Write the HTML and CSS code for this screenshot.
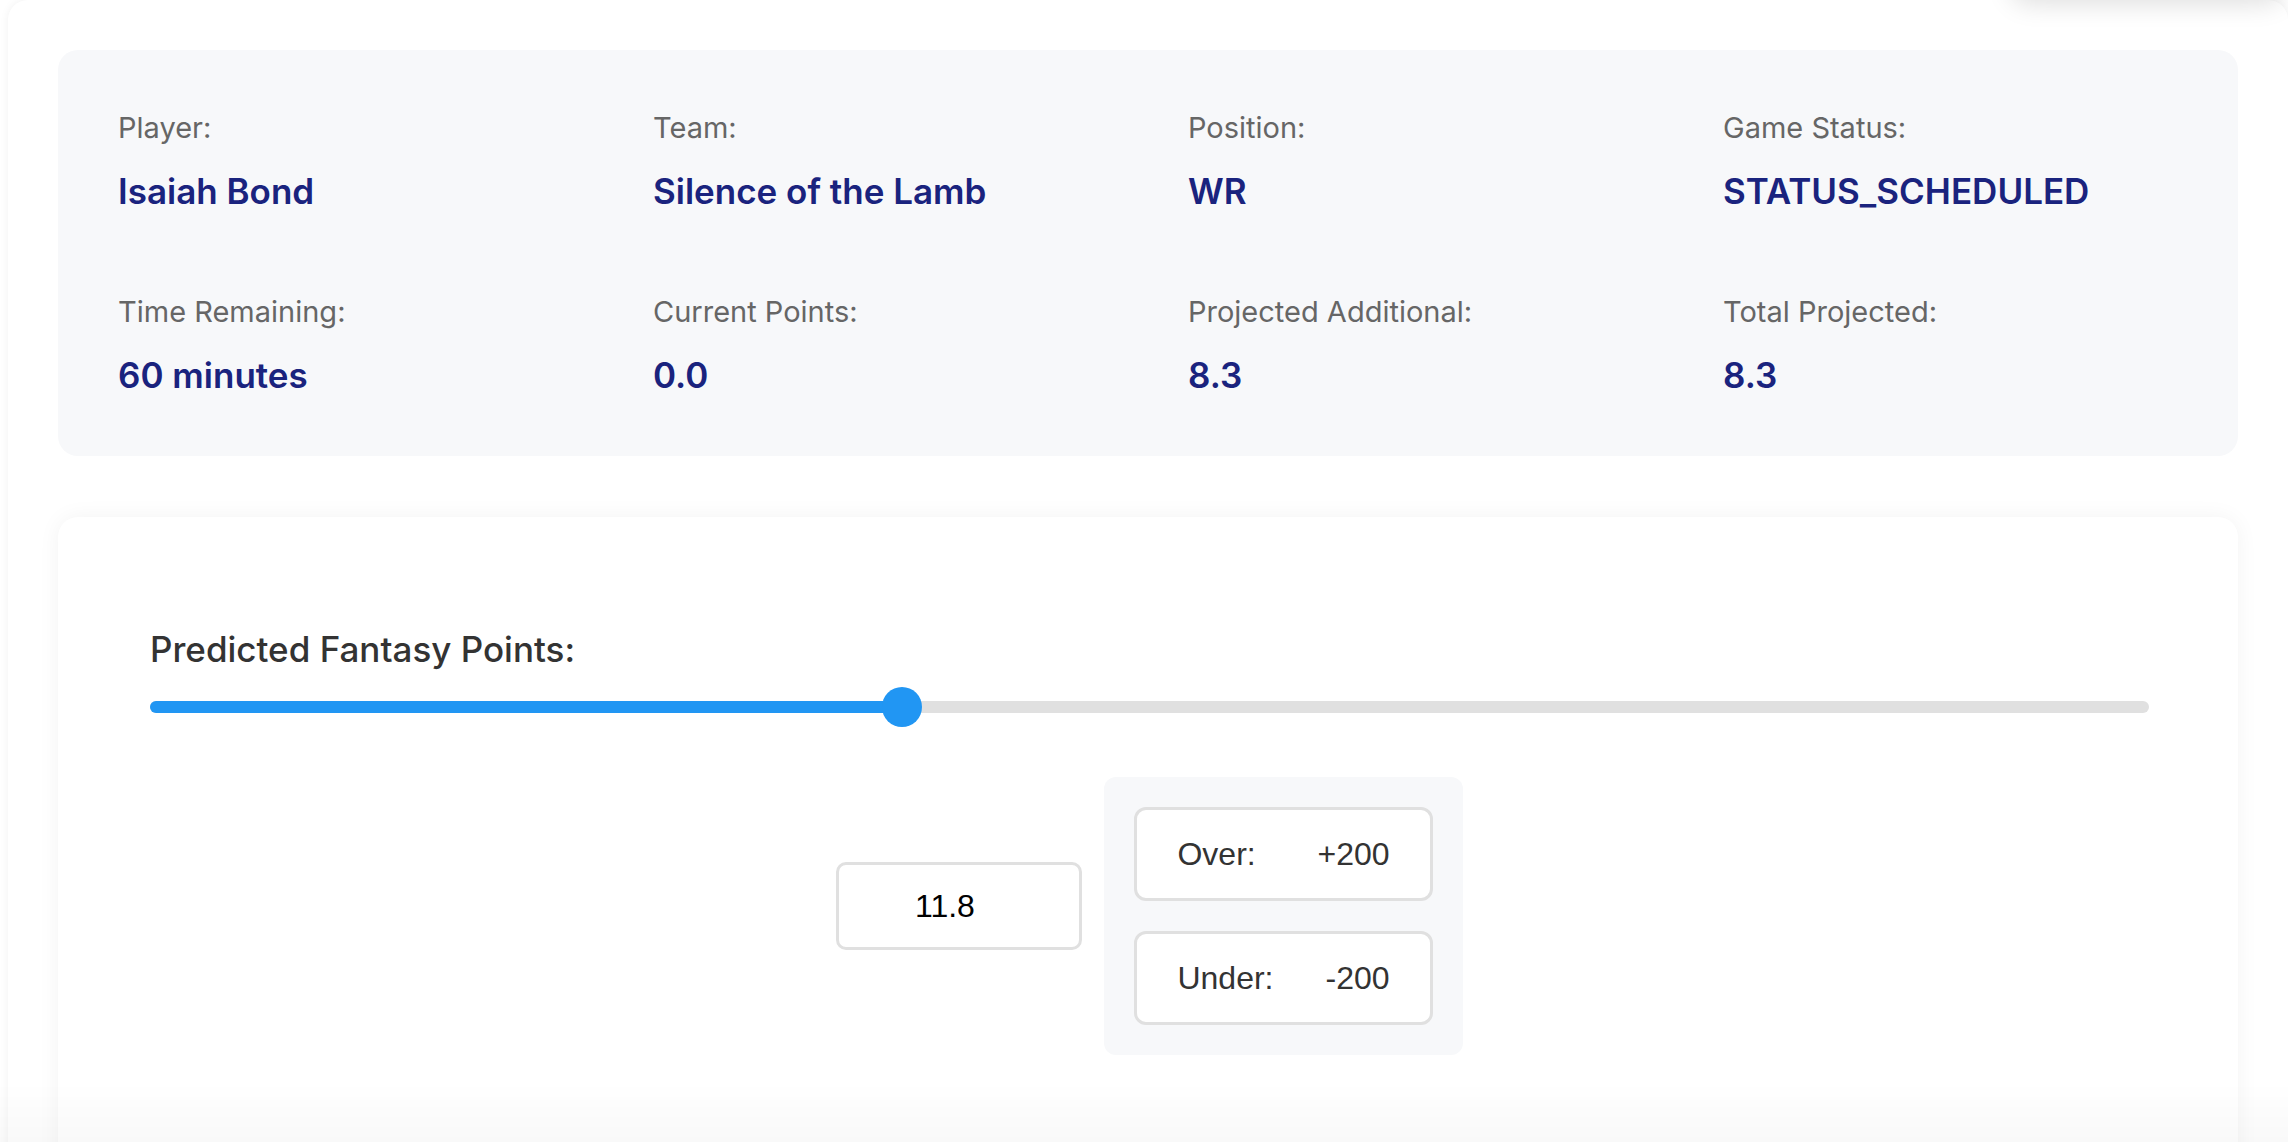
FILE: index.html
```html
<!DOCTYPE html>
<html lang="en">
<head>
<meta charset="utf-8">
<title>Player Prediction</title>
<link rel="stylesheet" href="styles.css">
</head>
<body>
<div class="top-popover"></div>
<main class="container">
  <section class="info">
    <div class="item"><div class="label">Player:</div><div class="value">Isaiah Bond</div></div>
    <div class="item"><div class="label">Team:</div><div class="value">Silence of the Lamb</div></div>
    <div class="item"><div class="label">Position:</div><div class="value">WR</div></div>
    <div class="item"><div class="label">Game Status:</div><div class="value">STATUS_SCHEDULED</div></div>
    <div class="item"><div class="label">Time Remaining:</div><div class="value">60 minutes</div></div>
    <div class="item"><div class="label">Current Points:</div><div class="value">0.0</div></div>
    <div class="item"><div class="label">Projected Additional:</div><div class="value">8.3</div></div>
    <div class="item"><div class="label">Total Projected:</div><div class="value">8.3</div></div>
  </section>
  <section class="card">
    <div class="heading">Predicted Fantasy Points:</div>
    <div class="slider">
      <div class="track">
        <div class="fill" style="width:37.62%"></div>
        <div class="thumb" style="left:37.62%"></div>
      </div>
    </div>
    <div class="bet-row">
      <input class="points-input" type="text" value="11.8">
      <div class="odds">
        <div class="odd"><span>Over:</span><span>+200</span></div>
        <div class="odd"><span>Under:</span><span>-200</span></div>
      </div>
    </div>
  </section>
</main>
<div class="bottom-fade"></div>
</body>
</html>
```
FILE: styles.css
```css
html, body {
  margin: 0;
  padding: 0;
  background: #ffffff;
  overflow: hidden;
}

body {
  font-family: "Inter", "Liberation Sans", sans-serif;
}

.top-popover {
  position: absolute;
  top: -100px;
  left: 2010px;
  width: 274px;
  height: 98px;
  border-radius: 20px;
  background: #ffffff;
  box-shadow: 0 6px 26px rgba(0, 0, 0, 0.13);
  z-index: 2;
}

.container {
  margin-left: 8px;
  padding: 50px;
  background: #ffffff;
  border-radius: 20px;
  box-shadow: 0 0 10px rgba(0, 0, 0, 0.06);
}

.info {
  display: grid;
  grid-template-columns: repeat(4, 1fr);
  column-gap: 40px;
  row-gap: 42px;
  padding: 40px;
  background: #f7f8fa;
  border-radius: 20px;
}

.item {
  padding: 20px;
}

.label {
  font-size: 29px;
  line-height: 35px;
  color: #666666;
  margin-bottom: 25px;
}

.value {
  font-size: 35px;
  line-height: 42px;
  font-weight: 600;
  color: #1a237e;
}

.card {
  margin-top: 61px;
  padding: 111px 89px 140px 92px;
  background: #ffffff;
  border-radius: 20px;
  box-shadow: 0 0 22px rgba(0, 0, 0, 0.05);
}

.heading {
  font-size: 35px;
  line-height: 42px;
  font-weight: 500;
  color: #333333;
  margin-bottom: 17px;
}

.slider {
  height: 40px;
  display: flex;
  align-items: center;
}

.track {
  position: relative;
  width: 100%;
  height: 12px;
  border-radius: 6px;
  background: #e0e0e0;
}

.fill {
  height: 100%;
  border-radius: 6px;
  background: #2196f3;
}

.thumb {
  position: absolute;
  top: 50%;
  width: 40px;
  height: 40px;
  margin: -20px 0 0 -20px;
  border-radius: 50%;
  background: #2196f3;
}

.bet-row {
  margin-top: 50px;
  display: flex;
  justify-content: center;
  align-items: center;
  gap: 22px;
}

.points-input {
  box-sizing: border-box;
  width: 246px;
  height: 88px;
  margin: 0 0 20px 0;
  padding: 0 29px 0 0;
  border: 3px solid #e0e0e0;
  border-radius: 10px;
  background: #ffffff;
  font-family: "Liberation Sans", Arial, sans-serif;
  font-size: 32px;
  color: #000000;
  text-align: center;
  outline: none;
}

.odds {
  display: flex;
  flex-direction: column;
  gap: 30px;
  padding: 30px;
  background: #f7f8fa;
  border-radius: 12px;
}

.odd {
  box-sizing: border-box;
  height: 94px;
  display: flex;
  align-items: center;
  justify-content: space-between;
  gap: 52px;
  padding: 0 40px;
  border: 3px solid #e0e0e0;
  border-radius: 12px;
  background: #ffffff;
  font-family: "Liberation Sans", Arial, sans-serif;
  font-size: 32px;
  color: #333333;
}

.bottom-fade {
  position: fixed;
  left: 0;
  right: 0;
  bottom: 0;
  height: 60px;
  background: linear-gradient(rgba(0, 0, 0, 0), rgba(0, 0, 0, 0.025));
  pointer-events: none;
}
```
